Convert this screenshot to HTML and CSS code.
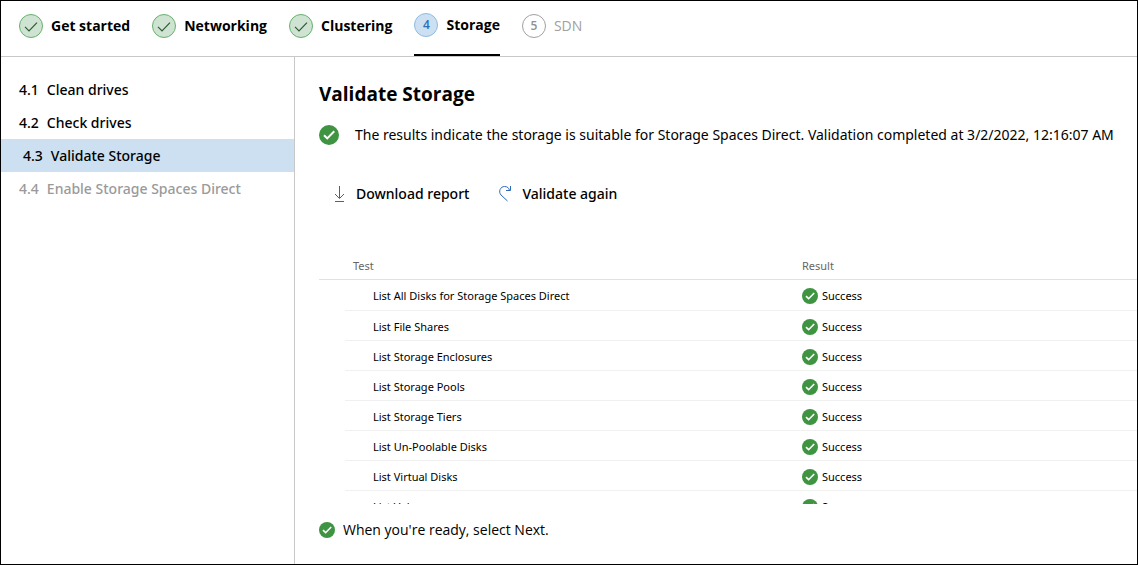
FILE: index.html
```html
<!DOCTYPE html>
<html lang="en">
<head>
<meta charset="utf-8">
<title>Validate Storage</title>
<link rel="stylesheet" href="styles.css">
</head>
<body>
<svg class="defs" aria-hidden="true">
  <symbol id="ok" viewBox="0 0 16 16"><circle cx="8" cy="8" r="8" fill="#3f9442"/><path d="M4 8.2l2.6 2.5L12.2 5" fill="none" stroke="#fff" stroke-width="1.6"/></symbol>
  <symbol id="done" viewBox="0 0 24 24"><circle cx="12" cy="12" r="11.5" fill="#cfe3d2" stroke="#68b06c"/><path d="M6 12.8l4 4L18 8.6" fill="none" stroke="#2f5a33" stroke-width="1.2"/></symbol>
</svg>
<nav class="steps" aria-label="Stages">
  <a class="step" href="#start"><svg class="step-icon"><use href="#done"/></svg>Get started</a>
  <a class="step" href="#networking"><svg class="step-icon"><use href="#done"/></svg>Networking</a>
  <a class="step" href="#clustering"><svg class="step-icon"><use href="#done"/></svg>Clustering</a>
  <a class="step step-current" href="#storage" aria-current="step"><span class="step-number">4</span>Storage</a>
  <a class="step step-pending" href="#sdn"><span class="step-number">5</span>SDN</a>
</nav>
<div class="layout">
  <nav class="sidebar" aria-label="Storage steps">
    <a class="substep" href="#clean"><span>4.1</span><span>Clean drives</span></a>
    <a class="substep" href="#check"><span>4.2</span><span>Check drives</span></a>
    <a class="substep substep-current" href="#validate"><span>4.3</span><span>Validate Storage</span></a>
    <a class="substep substep-pending" href="#enable"><span>4.4</span><span>Enable Storage Spaces Direct</span></a>
  </nav>
  <main class="content">
    <h1 class="title">Validate Storage</h1>
    <p class="summary"><svg class="ok-large"><use href="#ok"/></svg><span>The results indicate the storage is suitable for Storage Spaces Direct. Validation completed at 3/2/2022, 12:16:07 AM</span></p>
    <div class="actions">
      <button class="action" type="button"><svg class="action-icon" viewBox="0 0 16 18"><path d="M8.5 1v12M4 9l4.500 4.500L13 9M4 16.500h9" fill="none" stroke="#1b6ec2"/></svg>Download report</button>
      <button class="action" type="button"><svg class="action-icon" viewBox="0 0 16 18"><path d="M10.500 16L4 10C1 6.500 3.500 1.500 7.500 1.500c3 0 4.500 1.500 5 4M13.500 1v4.500H9" fill="none" stroke="#2f68b5"/></svg>Validate again</button>
    </div>
    <div class="results">
      <table class="table">
        <thead><tr><th class="indent"></th><th class="test">Test</th><th>Result</th></tr></thead>
        <tbody>
          <tr><td></td><td>List All Disks for Storage Spaces Direct</td><td><span class="result"><svg class="ok"><use href="#ok"/></svg>Success</span></td></tr>
          <tr><td></td><td>List File Shares</td><td><span class="result"><svg class="ok"><use href="#ok"/></svg>Success</span></td></tr>
          <tr><td></td><td>List Storage Enclosures</td><td><span class="result"><svg class="ok"><use href="#ok"/></svg>Success</span></td></tr>
          <tr><td></td><td>List Storage Pools</td><td><span class="result"><svg class="ok"><use href="#ok"/></svg>Success</span></td></tr>
          <tr><td></td><td>List Storage Tiers</td><td><span class="result"><svg class="ok"><use href="#ok"/></svg>Success</span></td></tr>
          <tr><td></td><td>List Un-Poolable Disks</td><td><span class="result"><svg class="ok"><use href="#ok"/></svg>Success</span></td></tr>
          <tr><td></td><td>List Virtual Disks</td><td><span class="result"><svg class="ok"><use href="#ok"/></svg>Success</span></td></tr>
          <tr><td></td><td>List Volumes</td><td><span class="result"><svg class="ok"><use href="#ok"/></svg>Success</span></td></tr>
        </tbody>
      </table>
    </div>
    <p class="ready"><svg class="ok"><use href="#ok"/></svg>When you're ready, select Next.</p>
  </main>
</div>
</body>
</html>
```
FILE: styles.css
```css
* { box-sizing: border-box; }
body {
  margin: 0;
  height: 100vh;
  display: flex;
  flex-direction: column;
  border: 1px solid #000;
  background: #fff;
  color: #000;
  font: 14px/20px "Noto Sans", "Open Sans", sans-serif;
}
a { color: inherit; text-decoration: none; }
svg { flex: none; }
.defs { position: absolute; width: 0; height: 0; }
.steps {
  display: flex;
  gap: 22px;
  height: 56px;
  flex: none;
  padding-left: 18px;
  border-bottom: 1px solid #c8c8c8;
}
.step {
  display: flex;
  align-items: center;
  gap: 8px;
  padding-bottom: 5px;
  font-family: "Open Sans", "Noto Sans", sans-serif;
  font-weight: 700;
}
.step-icon, .step-number { width: 24px; height: 24px; }
.step-number {
  border: 1px solid #8fbbe3;
  border-radius: 50%;
  background: #cce0f2;
  color: #2a6fbb;
  font-size: 12px;
  font-weight: 600;
  line-height: 22px;
  text-align: center;
}
.step-current { border-bottom: 2px solid #000; }
.step-pending { color: #a0a0a0; font-weight: 400; }
.step-pending .step-number { border-color: #a0a0a0; background: #fff; color: #909090; }
.layout { display: flex; flex: 1; min-height: 0; }
.sidebar {
  flex: none;
  width: 294px;
  padding-top: 16px;
  border-right: 1px solid #c8c8c8;
}
.substep {
  display: flex;
  gap: 8px;
  align-items: center;
  height: 33px;
  padding-left: 18px;
  font-weight: 500;
}
.substep-current { padding-left: 22px; background: #cce0f1; }
.substep-pending { color: #9a9a9a; }
.content {
  flex: 1;
  min-width: 0;
  display: flex;
  flex-direction: column;
  padding: 24px 0 24px 24px;
}
.title { margin: 0; font-family: "Open Sans", "Noto Sans", sans-serif; font-size: 19px; line-height: 26px; font-weight: 700; }
.summary { display: flex; align-items: center; gap: 16px; margin: 18px 0 0; white-space: nowrap; }
.ok-large { width: 20px; height: 20px; }
.actions { display: flex; gap: 28px; margin-top: 37px; padding-left: 12px; }
.action {
  display: flex;
  align-items: center;
  gap: 9px;
  height: 24px;
  padding: 0;
  border: 0;
  background: none;
  color: inherit;
  font: inherit;
  font-weight: 500;
}
.action-icon { width: 16px; height: 18px; }
.results { flex: 1; min-height: 0; margin-top: 46px; overflow: hidden; }
.table {
  width: 100%;
  border-collapse: separate;
  border-spacing: 0;
  table-layout: fixed;
  font-size: 11px;
  line-height: 16px;
}
th {
  height: 28px;
  padding: 0 8px;
  border-bottom: 1px solid #e1e1e1;
  color: #666;
  font-weight: 400;
  text-align: left;
}
.indent { width: 26px; }
.test { width: 449px; }
td { height: 30px; padding: 2px 8px 0; border-bottom: 1px solid #f0f0f0; }
td:first-child { border-bottom: 0; }
td:nth-child(2) { padding-left: 28px; }
tbody tr:first-child td { height: 31px; }
.result { display: flex; align-items: center; gap: 4px; }
.ok { width: 16px; height: 16px; }
.ready { display: flex; align-items: center; gap: 8px; margin: 16px 0 0; font-family: "Open Sans", "Noto Sans", sans-serif; }
```
